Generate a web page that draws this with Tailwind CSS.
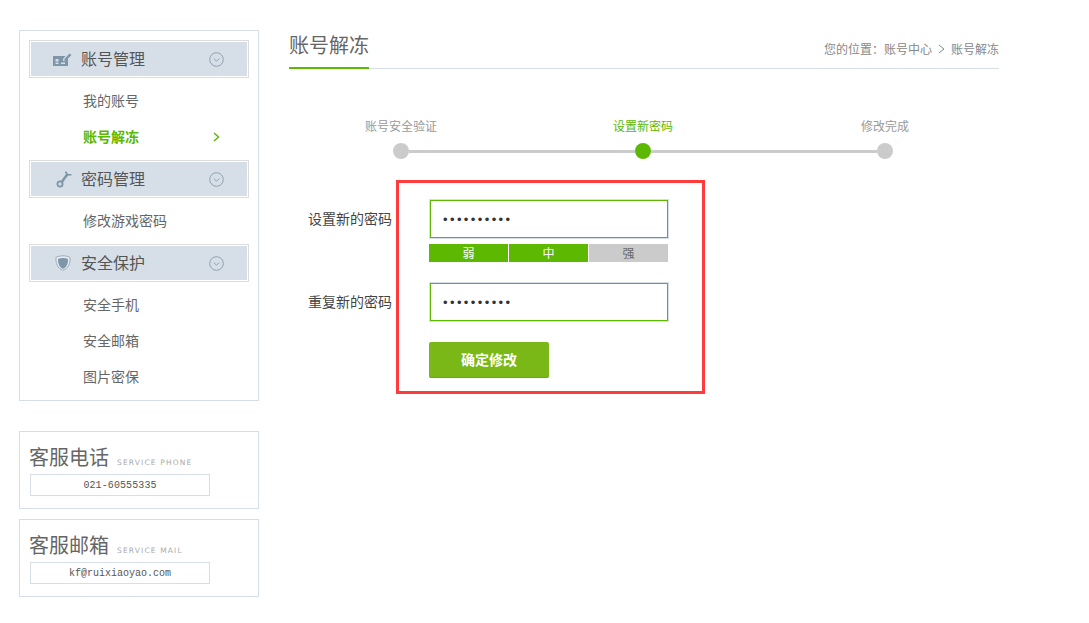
<!DOCTYPE html>
<html lang="zh">
<head>
<meta charset="utf-8">
<title>账号解冻</title>
<script src="https://cdn.jsdelivr.net/npm/@tailwindcss/browser@4"></script>
</head>
<body class="bg-white font-['Noto_Sans_CJK_SC','Liberation_Sans',sans-serif] text-[#666] overflow-hidden">
<div class="flex items-start w-[1089px] h-[623px] pl-[19px] pt-[30px]">
  <!-- sidebar -->
  <aside class="w-[240px] shrink-0">
    <nav class="border border-[#d6dfe7] px-[9px] pt-[9px] pb-[5px] h-[371px]">
      <div class="flex items-center h-[38px] border border-[#dcdcdc] shadow-[inset_0_0_0_1px_#fff] bg-[#d6dfe7]">
        <span class="w-[51px] flex justify-end pr-[9px]">
          <svg width="19" height="14" viewBox="0 0 19 14"><path fill="#7f95a8" d="M0 4h12.500L10 7v2l3-1 2-2v8H0z"/><path fill="#7f95a8" d="M11 7.500 16.500 1.500 18.500 3 13 8.500z"/><rect x="2.500" y="7" width="3" height="2.500" fill="#d6dfe7"/><rect x="2.500" y="10.500" width="3" height="1.500" fill="#d6dfe7"/><rect x="8" y="10.500" width="4" height="1.500" fill="#d6dfe7"/></svg>
        </span>
        <span class="text-[16px] leading-none text-[#555] mb-[2px]">账号管理</span>
        <svg class="ml-auto mr-[24px]" width="15" height="15" viewBox="0 0 15 15" fill="none" stroke="#8ea2b2"><circle cx="7.500" cy="7.500" r="6.800"/><path d="M4.800 6.500 7.500 9.200l2.700-2.700"/></svg>
      </div>
      <ul class="my-[5px] text-[14px]">
        <li class="h-[36px] flex items-center pl-[54px] pb-[2px]">我的账号</li>
        <li class="h-[36px] flex items-center pl-[54px] pr-[29px] pb-[2px] font-bold text-[#5cb800]">账号解冻
          <svg class="ml-auto mt-[2px]" width="7" height="10" viewBox="0 0 7 10" fill="none" stroke="#5cb800" stroke-width="1.400"><path d="M1 1l4.500 4L1 9"/></svg>
        </li>
      </ul>
      <div class="flex items-center h-[38px] border border-[#dcdcdc] shadow-[inset_0_0_0_1px_#fff] bg-[#d6dfe7]">
        <span class="w-[51px] flex justify-end pr-[9px]">
          <svg width="16" height="18" viewBox="0 0 16 18" fill="none" stroke="#7f95a8"><circle cx="4" cy="14" r="2.600" stroke-width="1.800"/><path d="M5.800 12 11.500 4" stroke-width="2.400"/><path d="M9.500 1.500l2.500 4.500M11 4.800h4.500" stroke-width="1.600"/></svg>
        </span>
        <span class="text-[16px] leading-none text-[#555] mb-[2px]">密码管理</span>
        <svg class="ml-auto mr-[24px]" width="15" height="15" viewBox="0 0 15 15" fill="none" stroke="#8ea2b2"><circle cx="7.500" cy="7.500" r="6.800"/><path d="M4.800 6.500 7.500 9.200l2.700-2.700"/></svg>
      </div>
      <ul class="my-[5px] text-[14px]">
        <li class="h-[36px] flex items-center pl-[54px] pb-[2px]">修改游戏密码</li>
      </ul>
      <div class="flex items-center h-[38px] border border-[#dcdcdc] shadow-[inset_0_0_0_1px_#fff] bg-[#d6dfe7]">
        <span class="w-[51px] flex justify-end pr-[10px]">
          <svg width="16" height="16" viewBox="0 0 16 16"><path fill="#e6ebf0" stroke="#9aacba" d="M8 .8c2.500 0 5 .5 7 1.500.4 6-1.500 11-7 13-5.500-2-7.400-7-7-13C3 1.300 5.500.8 8 .8z"/><path fill="#7f95a8" d="M8 3c2 0 3.600.3 5 .9.1 4.600-1.300 8.300-5 9.800-3.700-1.500-5.100-5.200-5-9.800C4.400 3.300 6 3 8 3z"/></svg>
        </span>
        <span class="text-[16px] leading-none text-[#555] mb-[2px]">安全保护</span>
        <svg class="ml-auto mr-[24px]" width="15" height="15" viewBox="0 0 15 15" fill="none" stroke="#8ea2b2"><circle cx="7.500" cy="7.500" r="6.800"/><path d="M4.800 6.500 7.500 9.200l2.700-2.700"/></svg>
      </div>
      <ul class="mt-[5px] text-[14px]">
        <li class="h-[36px] flex items-center pl-[54px] pb-[2px]">安全手机</li>
        <li class="h-[36px] flex items-center pl-[54px] pb-[2px]">安全邮箱</li>
        <li class="h-[36px] flex items-center pl-[54px] pb-[2px]">图片密保</li>
      </ul>
    </nav>
    <section class="mt-[30px] h-[78px] border border-[#d6dfe7] pl-[10px] pt-[10px]">
      <div class="flex items-end h-[32px]">
        <span class="text-[20px] leading-[30px] text-[#666] -ml-px mb-[2px]">客服电话</span>
        <span class="ml-[8px] mb-[5px] text-[7.500px] leading-[12px] tracking-[1.150px] text-[#aaa] font-['DejaVu_Sans',sans-serif]">SERVICE PHONE</span>
      </div>
      <div class="w-[180px] h-[22px] border border-[#d6dfe7] flex items-center justify-center text-[10px] tracking-[0.1px] text-[#555] font-['Liberation_Mono',monospace]">021-60555335</div>
    </section>
    <section class="mt-[10px] h-[78px] border border-[#d6dfe7] pl-[10px] pt-[10px]">
      <div class="flex items-end h-[32px]">
        <span class="text-[20px] leading-[30px] text-[#666] -ml-px mb-[2px]">客服邮箱</span>
        <span class="ml-[8px] mb-[5px] text-[7.500px] leading-[12px] tracking-[1.150px] text-[#aaa] font-['DejaVu_Sans',sans-serif]">SERVICE MAIL</span>
      </div>
      <div class="w-[180px] h-[22px] border border-[#d6dfe7] flex items-center justify-center text-[10px] text-[#555] font-['Liberation_Mono',monospace]">kf@ruixiaoyao.com</div>
    </section>
  </aside>
  <!-- main -->
  <main class="w-[710px] ml-[30px]">
    <header class="flex items-end justify-between h-[39px] border-b border-[#d6dfe7]">
      <h1 class="text-[20px] leading-[30px] h-[39px] border-b-2 border-[#5cb800] -mb-px w-[80px] whitespace-nowrap text-[#666]">账号解冻</h1>
      <p class="flex items-center text-[12px] leading-[18px] mb-[10px] text-[#888]">您的位置：账号中心<svg class="mx-[6px]" width="7" height="10" viewBox="0 0 7 10" fill="none" stroke="#888"><path d="M1 1l5 4-5 4"/></svg>账号解冻</p>
    </header>
    <!-- steps -->
    <div class="flex ml-[104px] w-[500px] mt-[49px] h-[41px] text-[12px] leading-[16px]">
      <div class="w-4 flex flex-col items-center justify-between shrink-0">
        <span class="whitespace-nowrap text-[#999]">账号安全验证</span>
        <span class="w-4 h-4 rounded-full bg-[#cbcbcb]"></span>
      </div>
      <span class="flex-1 self-end h-[3px] mb-[6px] bg-[#cbcbcb]"></span>
      <div class="w-4 flex flex-col items-center justify-between shrink-0">
        <span class="whitespace-nowrap text-[#5cb800]">设置新密码</span>
        <span class="w-4 h-4 rounded-full bg-[#5cb800]"></span>
      </div>
      <span class="flex-1 self-end h-[3px] mb-[6px] bg-[#cbcbcb]"></span>
      <div class="w-4 flex flex-col items-center justify-between shrink-0">
        <span class="whitespace-nowrap text-[#999]">修改完成</span>
        <span class="w-4 h-4 rounded-full bg-[#cbcbcb]"></span>
      </div>
    </div>
    <!-- form -->
    <div class="flex mt-[21px] ml-[19px]">
      <div class="w-[88px] pt-[19px] text-[14px] text-[#444]">
        <div class="h-[40px] flex items-center pb-[2px]">设置新的密码</div>
        <div class="h-[43px]"></div>
        <div class="h-[40px] flex items-center pb-[2px]">重复新的密码</div>
      </div>
      <form class="w-[309px] h-[214px] border-[3px] border-[#ff3c3c] pt-[16px] pl-[30px]">
        <div class="w-[240px] h-[40px] border border-[#d6dfe7]">
          <input type="password" value="1234567890" class="block w-full h-full border border-[#5cb800] pl-[12px] text-[13px] tracking-[2.400px] text-[#333] outline-none font-['Liberation_Sans',sans-serif]">
        </div>
        <div class="flex gap-px w-[239px] h-[18px] mt-[5px] text-[12px] leading-[18px] text-center">
          <span class="flex-1 bg-[#5cb800] text-white">弱</span>
          <span class="flex-1 bg-[#5cb800] text-white">中</span>
          <span class="flex-1 bg-[#cbcbcb] text-[#666]">强</span>
        </div>
        <div class="w-[240px] h-[40px] mt-[20px] border border-[#d6dfe7]">
          <input type="password" value="1234567890" class="block w-full h-full border border-[#5cb800] pl-[12px] text-[13px] tracking-[2.400px] text-[#333] outline-none font-['Liberation_Sans',sans-serif]">
        </div>
        <button type="button" class="block w-[120px] h-[36px] mt-[20px] rounded-[2px] bg-[#7ab818] border-b border-[#6da814] text-white text-[14px] font-bold">确定修改</button>
      </form>
    </div>
  </main>
</div>
</body>
</html>
